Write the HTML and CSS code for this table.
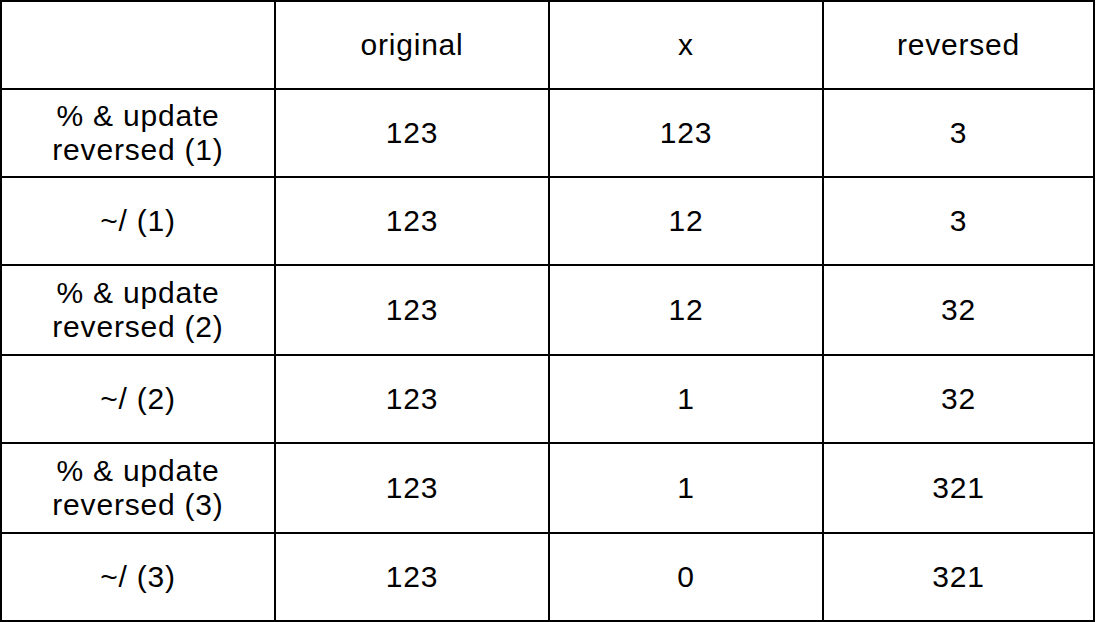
FILE: index.html
```html
<!DOCTYPE html>
<html>
<head>
<meta charset="utf-8">
<link rel="stylesheet" href="styles.css">
</head>
<body>
<table class="grid">
  <colgroup>
    <col class="c-wide"><col class="c-wide"><col class="c-wide"><col class="c-last">
  </colgroup>
  <tr class="r-86">
    <td></td><td>original</td><td>x</td><td>reversed</td>
  </tr>
  <tr class="r-86">
    <td>% &amp; update<br>reversed (1)</td><td>123</td><td>123</td><td>3</td>
  </tr>
  <tr class="r-86">
    <td>~/ (1)</td><td>123</td><td>12</td><td>3</td>
  </tr>
  <tr class="r-88">
    <td>% &amp; update<br>reversed (2)</td><td>123</td><td>12</td><td>32</td>
  </tr>
  <tr class="r-86">
    <td>~/ (2)</td><td>123</td><td>1</td><td>32</td>
  </tr>
  <tr class="r-88">
    <td>% &amp; update<br>reversed (3)</td><td>123</td><td>1</td><td>321</td>
  </tr>
  <tr class="r-86">
    <td>~/ (3)</td><td>123</td><td>0</td><td>321</td>
  </tr>
</table>
</body>
</html>
```

FILE: styles.css
```css
html, body {
  margin: 0;
  padding: 0;
  background: #ffffff;
}

body {
  width: 1096px;
  height: 622px;
  overflow: hidden;
  font-family: "Liberation Sans", Arial, sans-serif;
  color: #000000;
}

.grid {
  table-layout: fixed;
  width: 1095px;
  border-collapse: separate;
  border-spacing: 2px;
  background: #000000;
}

.c-wide { width: 272px; }
.c-last { width: 269px; }

.grid td {
  background: #ffffff;
  padding: 0;
  text-align: center;
  vertical-align: middle;
  font-size: 30px;
  line-height: 34px;
  letter-spacing: 0.8px;
}

.r-86 td { height: 86px; }
.r-88 td { height: 88px; }
```
